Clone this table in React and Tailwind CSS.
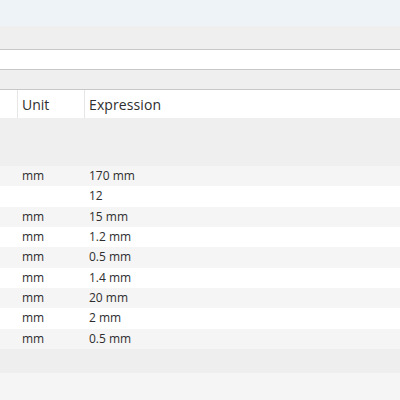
export default function App() {
  const rows = [
    ["mm", "170 mm"],
    ["", "12"],
    ["mm", "15 mm"],
    ["mm", "1.2 mm"],
    ["mm", "0.5 mm"],
    ["mm", "1.4 mm"],
    ["mm", "20 mm"],
    ["mm", "2 mm"],
    ["mm", "0.5 mm"],
  ];
  return (
    <div className="w-[400px] h-[400px] overflow-hidden flex flex-col text-[#2e2e2e] bg-[#f5f5f5]" style={{ fontFamily: '"Open Sans", "Noto Sans", sans-serif' }}>
      <div className="h-[26px] bg-[#eef3f7]" />
      <div className="h-[24px] bg-[#efefef] border-b border-[#c8c8c8]" />
      <div className="h-[20px] bg-white border-b border-[#c8c8c8]" />
      <div className="h-[20px] bg-[#efefef] border-b border-[#c8c8c8]" />
      <div className="h-[28px] bg-white flex text-[14px]">
        <div className="w-[18px] border-r border-[#e6e6e6]" />
        <div className="w-[67px] border-r border-[#e6e6e6] pl-[4px] flex items-center">Unit</div>
        <div className="pl-[4px] flex items-center tracking-[0.1px]">Expression</div>
      </div>
      <div className="h-[48px] bg-[#efefef]" />
      {rows.map((r, i) => (
        <div key={i} className={`h-[20.33px] flex items-center text-[12px] ${i % 2 === 0 ? "bg-[#f5f5f5]" : "bg-white"}`}>
          <div className="w-[85px] pl-[22px]">{r[0]}</div>
          <div className="pl-[4px]">{r[1]}</div>
        </div>
      ))}
      <div className="h-[24px] bg-[#eeeeee]" />
      <div className="flex-1 bg-[#f5f5f5]" />
    </div>
  );
}
